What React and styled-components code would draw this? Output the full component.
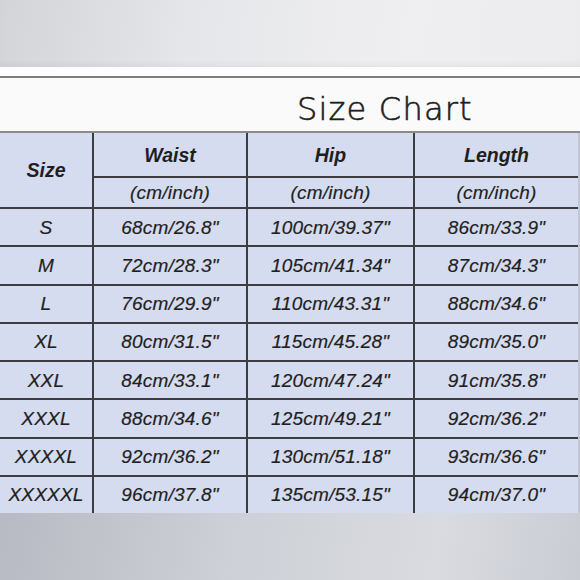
import React from "react";
import styled, { createGlobalStyle } from "styled-components";

const Global = createGlobalStyle`
  html, body { margin: 0; padding: 0; }
  body { width: 580px; height: 580px; overflow: hidden; }
`;

const Page = styled.div`
  width: 580px;
  height: 580px;
  display: flex;
  flex-direction: column;
  background: #d4d6db;
`;

const TopShade = styled.div`
  height: 67px;
  background: linear-gradient(100deg, #d3d4d8 0%, #e6e7ea 35%, #efeff1 70%, #ececee 100%);
  box-shadow: inset 0 -6px 8px -6px rgba(0,0,0,0.08);
`;

const BottomShade = styled.div`
  flex: 1;
  background: linear-gradient(100deg, #b7bac2 0%, #cdd0d6 40%, #d9dbe0 75%, #c9ccd3 100%);
`;

const Panel = styled.div`
  background: #fdfdfd;
  padding-top: 9px;
`;

const TitleBar = styled.div`
  height: 53px;
  border-top: 2px solid #7c7c7e;
  border-bottom: 2px solid #8a8a8c;
  background: #fafafa;
  display: flex;
  align-items: center;
  padding-left: 297px;
  box-sizing: content-box;
`;

const Title = styled.h1`
  margin: 0;
  font-family: "DejaVu Sans", sans-serif;
  font-weight: 200;
  font-size: 32px;
  letter-spacing: 1.2px;
  color: #1e1e1e;
  line-height: 1;
  padding-top: 9px;
  -webkit-text-stroke: 0.6px #1e1e1e;
`;

const Grid = styled.div`
  display: grid;
  grid-template-columns: 92px 152px 165px 163px;
  grid-template-rows: 43px 29px repeat(8, 36.25px);
  gap: 2px;
  background: #3d3d40;
  width: 578px;
  border-right: 2px solid #c4c7d0;
`;

const Cell = styled.div`
  background: #d6dcef;
  display: flex;
  align-items: center;
  justify-content: center;
  font-family: "Liberation Sans", Arial, sans-serif;
  font-style: italic;
  font-size: ${(p) => (p.$head ? "19.5px" : "19px")};
  font-weight: ${(p) => (p.$head ? 700 : 400)};
  -webkit-text-stroke: ${(p) => (p.$head ? "0" : "0.2px")} #1f1f22;
  letter-spacing: ${(p) => (p.$head ? "0" : "0.2px")};
  color: #1f1f22;
  grid-row: ${(p) => (p.$span ? `span ${p.$span}` : "auto")};
  white-space: nowrap;
  padding-top: 1px;
`;

const rows = [
  ["S", "68cm/26.8\"", "100cm/39.37\"", "86cm/33.9\""],
  ["M", "72cm/28.3\"", "105cm/41.34\"", "87cm/34.3\""],
  ["L", "76cm/29.9\"", "110cm/43.31\"", "88cm/34.6\""],
  ["XL", "80cm/31.5\"", "115cm/45.28\"", "89cm/35.0\""],
  ["XXL", "84cm/33.1\"", "120cm/47.24\"", "91cm/35.8\""],
  ["XXXL", "88cm/34.6\"", "125cm/49.21\"", "92cm/36.2\""],
  ["XXXXL", "92cm/36.2\"", "130cm/51.18\"", "93cm/36.6\""],
  ["XXXXXL", "96cm/37.8\"", "135cm/53.15\"", "94cm/37.0\""],
];

export default function App() {
  return (
    <Page>
      <Global />
      <TopShade />
      <Panel>
        <TitleBar>
          <Title>Size Chart</Title>
        </TitleBar>
        <Grid>
          <Cell $head $span={2}>Size</Cell>
          <Cell $head>Waist</Cell>
          <Cell $head>Hip</Cell>
          <Cell $head>Length</Cell>
          <Cell>(cm/inch)</Cell>
          <Cell>(cm/inch)</Cell>
          <Cell>(cm/inch)</Cell>
          {rows.map((r) =>
            r.map((v, i) => <Cell key={r[0] + i}>{v}</Cell>)
          )}
        </Grid>
      </Panel>
      <BottomShade />
    </Page>
  );
}
